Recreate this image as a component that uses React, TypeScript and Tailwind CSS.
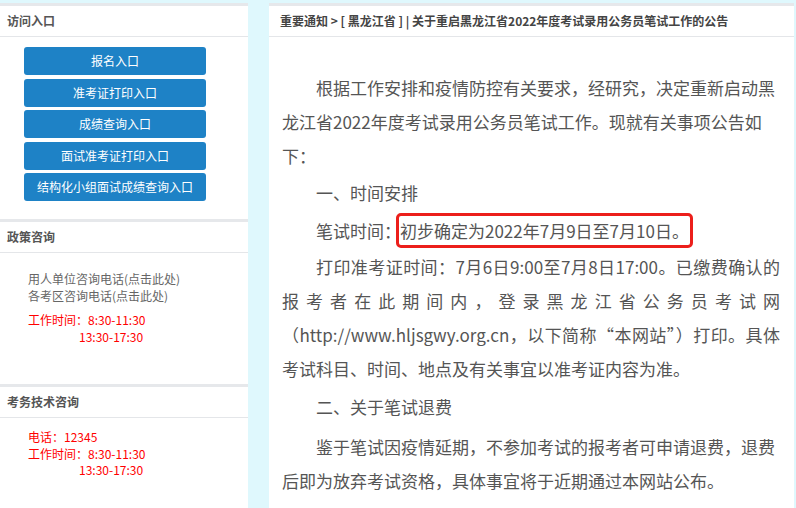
import React from 'react';

const font = { fontFamily: '"Noto Sans CJK SC", "Liberation Sans", sans-serif' };

const entries = ['报名入口', '准考证打印入口', '成绩查询入口', '面试准考证打印入口', '结构化小组面试成绩查询入口'];

function SideHeader({ title }: { title: string }) {
  return (
    <div className="h-[31px] flex items-center px-[7px] border-b border-[#e4e6e9] text-[12px] font-bold text-[#555]">
      {title}
    </div>
  );
}

export default function App() {
  return (
    <div className="w-[796px] h-[508px] overflow-hidden bg-[#dff8fd] flex pt-[3px]" style={font}>
      {/* left column */}
      <div className="w-[248px] flex flex-col">
        <div className="h-[216px] bg-white border-t-[3px] border-[#e6e8eb]">
          <SideHeader title="访问入口" />
          <div className="pt-[10px] flex flex-col gap-[3.5px]">
            {entries.map((e) => (
              <a
                key={e}
                href="#"
                className="ml-[24px] w-[182px] h-[28px] rounded-[3px] bg-[#1e82c6] text-white text-[12px] flex items-center justify-center"
              >
                {e}
              </a>
            ))}
          </div>
        </div>

        <div className="h-[165px] bg-white border-t-[3px] border-[#e6e8eb]">
          <SideHeader title="政策咨询" />
          <div className="pt-[17px] pl-[28px] text-[12px] leading-[17px]">
            <div className="text-[#666]">用人单位咨询电话(点击此处)</div>
            <div className="text-[#666]">各考区咨询电话(点击此处)</div>
            <div className="mt-[7px] text-[#f00]">工作时间：8:30-11:30</div>
            <div className="pl-[51px] text-[#f00]">13:30-17:30</div>
          </div>
        </div>

        <div className="flex-1 bg-white border-t-[3px] border-[#e6e8eb]">
          <SideHeader title="考务技术咨询" />
          <div className="pt-[11px] pl-[28px] text-[12px] leading-[16.5px] text-[#f00]">
            <div>电话：12345</div>
            <div>工作时间：8:30-11:30</div>
            <div className="pl-[51px]">13:30-17:30</div>
          </div>
        </div>
      </div>

      {/* article */}
      <div className="ml-[21px] w-[525px] bg-white border-t-[3px] border-[#e6e8eb]">
        <div className="h-[31px] flex items-center px-[11px] border-b border-[#e4e6e9] text-[12px] font-bold text-[#444]">
          重要通知 &gt; [ 黑龙江省 ] | 关于重启黑龙江省2022年度考试录用公务员笔试工作的公告
        </div>
        <div className="pt-[34px] pl-[13px] pr-[14px] text-[17px] leading-[34px] text-[#555]">
          <p className="indent-[2em] mb-[3px]">
            根据工作安排和疫情防控有关要求，经研究，决定重新启动黑龙江省2022年度考试录用公务员笔试工作。现就有关事项公告如下：
          </p>
          <p className="indent-[2em] mb-[3px]">一、时间安排</p>
          <p className="indent-[2em] mb-[2px]">
            笔试时间：
            <span className="inline-block -ml-[5px] indent-0 leading-[29px] border-[3px] border-[#ec1f1b] rounded-[5px] px-[1px]">
              初步确定为2022年7月9日至7月10日。
            </span>
          </p>
          <p className="indent-[2em] mb-[4px] text-justify">
            打印准考证时间：7月6日9:00至7月8日17:00。已缴费确认的报考者在此期间内，登录黑龙江省公务员考试网（http://www.hljsgwy.org.cn，以下简称“本网站”）打印。具体考试科目、时间、地点及有关事宜以准考证内容为准。
          </p>
          <p className="indent-[2em] mb-[6px]">二、关于笔试退费</p>
          <p className="indent-[2em]">
            鉴于笔试因疫情延期，不参加考试的报考者可申请退费，退费后即为放弃考试资格，具体事宜将于近期通过本网站公布。
          </p>
        </div>
      </div>
    </div>
  );
}
